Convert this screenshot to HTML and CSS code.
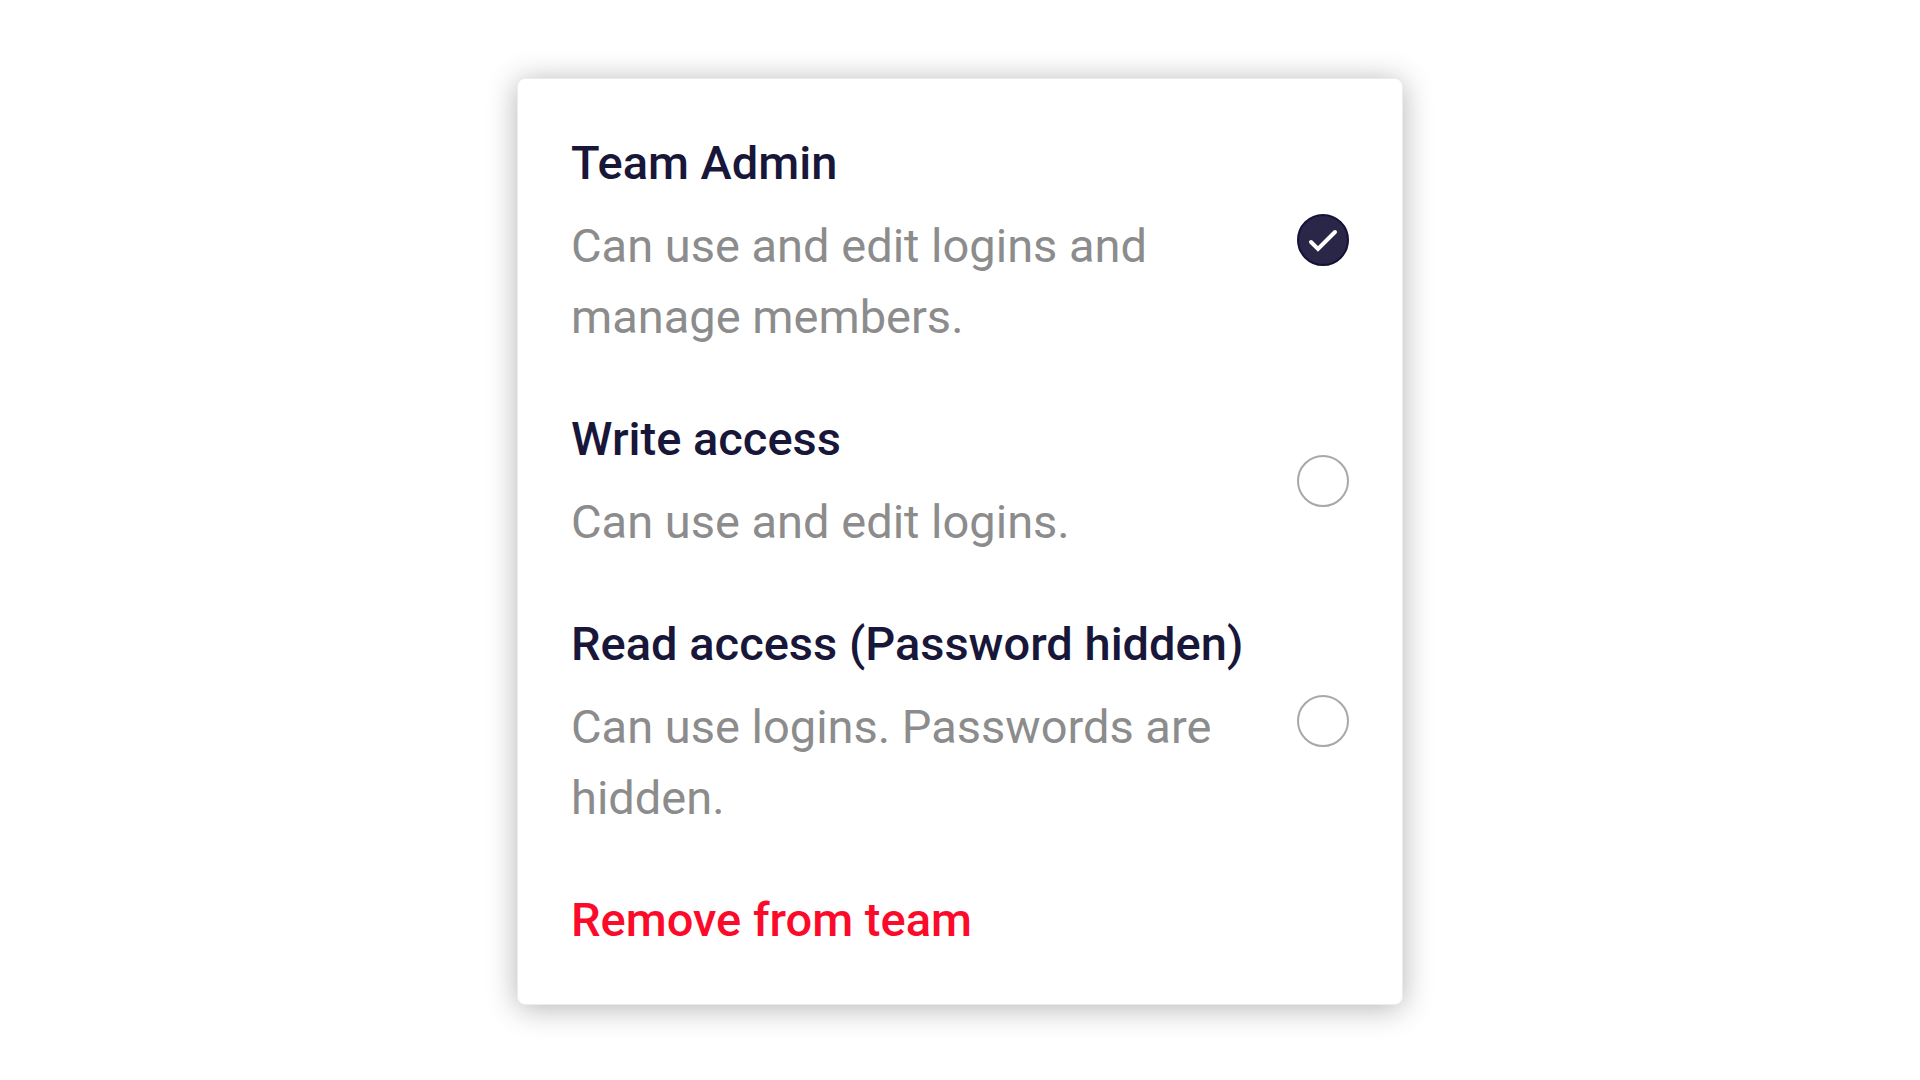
FILE: index.html
```
<!DOCTYPE html>
<html lang="en">
<head>
    <meta charset="utf-8">
    <meta name="viewport" content="width=device-width, initial-scale=1">
    <title>Team permissions</title>
    <link rel="stylesheet" href="styles.css">
</head>
<body>
    <form class="menu">
        <!-- Roles -->
        <label class="option" for="role-admin">
            <span class="option-text">
                <span class="option-title">Team Admin</span>
                <span class="option-description">Can use and edit logins and manage members.</span>
            </span>
            <span class="option-control">
                <input type="radio" id="role-admin" name="role" value="admin" checked>
                <svg class="check" viewBox="0 0 52 52" aria-hidden="true">
                    <path d="M14 28L21 35L38 18"></path>
                </svg>
            </span>
        </label>

        <label class="option" for="role-write">
            <span class="option-text">
                <span class="option-title">Write access</span>
                <span class="option-description">Can use and edit logins.</span>
            </span>
            <span class="option-control">
                <input type="radio" id="role-write" name="role" value="write">
                <svg class="check" viewBox="0 0 52 52" aria-hidden="true">
                    <path d="M14 28L21 35L38 18"></path>
                </svg>
            </span>
        </label>

        <label class="option" for="role-read">
            <span class="option-text">
                <span class="option-title">Read access (Password hidden)</span>
                <span class="option-description">Can use logins. Passwords are hidden.</span>
            </span>
            <span class="option-control">
                <input type="radio" id="role-read" name="role" value="read">
                <svg class="check" viewBox="0 0 52 52" aria-hidden="true">
                    <path d="M14 28L21 35L38 18"></path>
                </svg>
            </span>
        </label>

        <button type="button" class="remove">Remove from team</button>
    </form>
</body>
</html>
```
FILE: styles.css
```
* {
    box-sizing: border-box;
}

body {
    margin: 0;
    padding-top: 3px;
    min-height: 100vh;
    display: flex;
    align-items: center;
    justify-content: center;
    background-color: #fff;
    font-family: Roboto, Arial, sans-serif;
    font-size: 47px;
    line-height: 70px;
}

/* Card */
.menu {
    width: 100%;
    max-width: 886px;
    padding: 49px 53px;
    display: flex;
    flex-direction: column;
    align-items: stretch;
    gap: 52px;
    border: 1px solid #ececec;
    border-radius: 8px;
    background-color: #fff;
    box-shadow: 0 3px 30px rgba(0, 0, 0, 0.3);
}

/* Role rows */
.option {
    display: flex;
    align-items: center;
    gap: 24px;
    cursor: pointer;
}

.option-text {
    flex: 1;
    display: flex;
    flex-direction: column;
    gap: 12px;
}

.option-title {
    color: #181739;
    font-weight: 500;
}

.option-description {
    color: #8c8c8c;
    line-height: 71px;
}

/* Radio buttons */
.option-control {
    position: relative;
    display: flex;
}

.option-control input {
    appearance: none;
    width: 52px;
    height: 52px;
    margin: 0;
    border: 2px solid #a8a8a8;
    border-radius: 50%;
    background-color: #fff;
    cursor: pointer;
}

.option-control input:checked {
    border-color: #15123a;
    background-color: #292647;
}

.check {
    position: absolute;
    inset: 0;
    display: none;
    fill: none;
    stroke: #fff;
    stroke-width: 4;
    stroke-linecap: round;
    pointer-events: none;
}

input:checked + .check {
    display: block;
}

.remove {
    align-self: flex-start;
    padding: 0;
    border: none;
    background: none;
    color: #fc0a2a;
    font: inherit;
    font-weight: 500;
    cursor: pointer;
}
```
